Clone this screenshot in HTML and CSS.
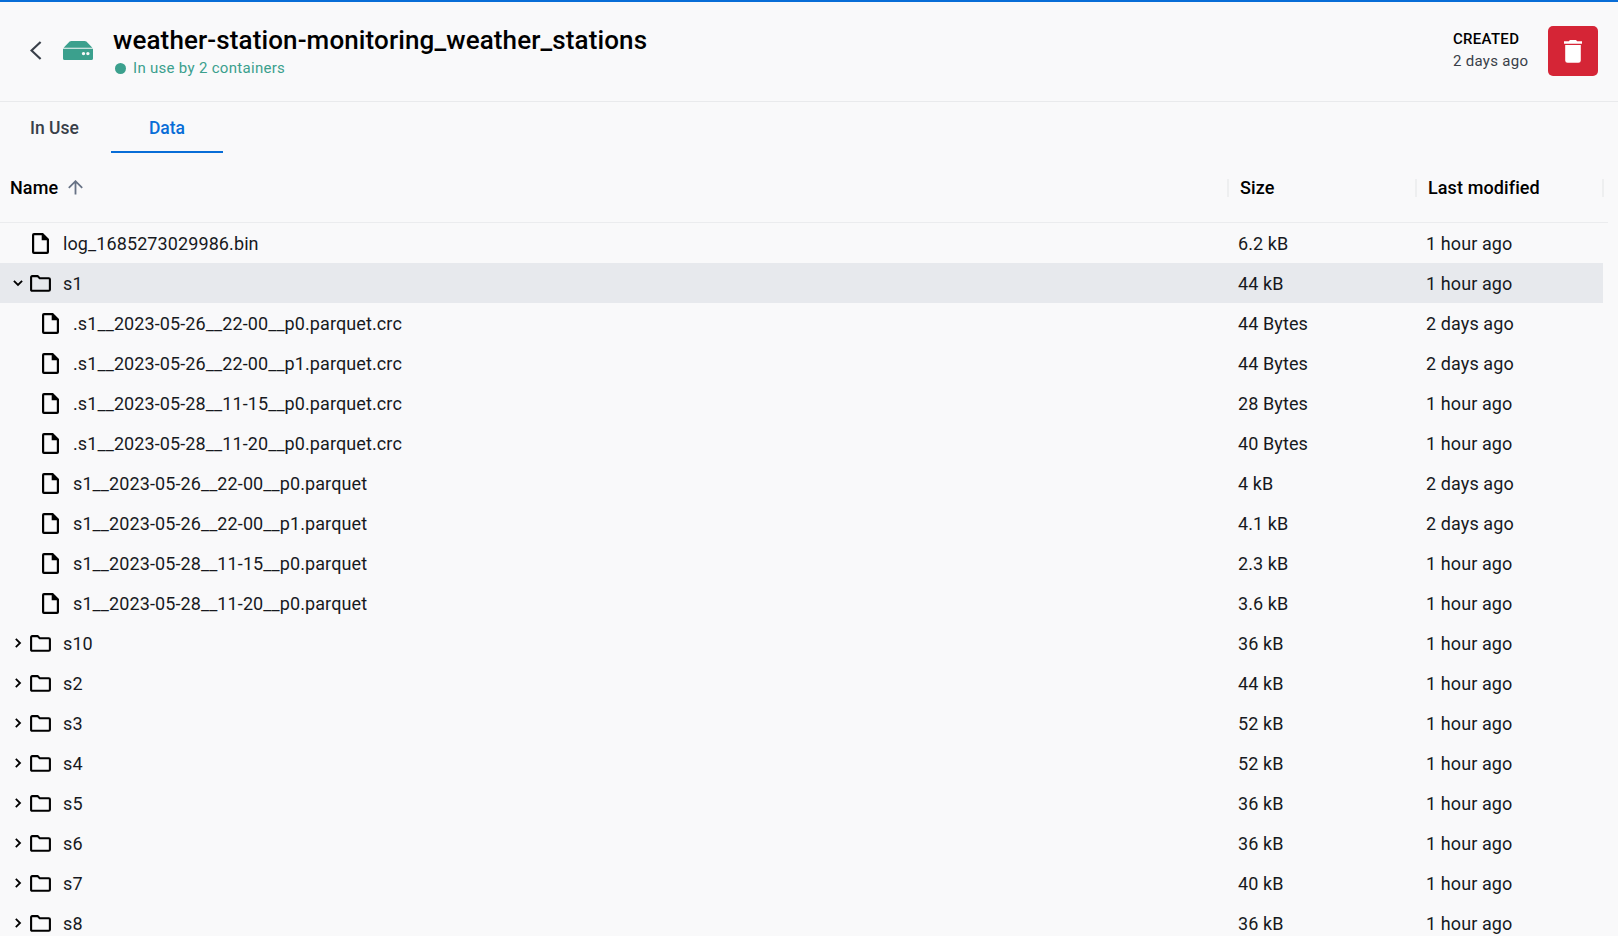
FILE: index.html
```
<!DOCTYPE html>
<html lang="en">
<head>
<meta charset="utf-8">
<title>weather-station-monitoring_weather_stations</title>
<link rel="stylesheet" href="styles.css">
</head>
<body>
<svg class="sprite" aria-hidden="true">
  <symbol id="file" viewBox="0 0 17 21"><path fill-rule="evenodd" d="M2 0H11L17 6V19Q17 21 15 21H2Q0 21 0 19V2Q0 0 2 0ZM2.2 2.2V18.8H14.8V7.3H9.7V2.2Z"/></symbol>
  <symbol id="folder" viewBox="0 0 21 17"><path d="M1.1 2.2Q1.1 1.1 2.2 1.1H7.6L9.7 3.2H18.8Q19.9 3.2 19.9 4.3V14.7Q19.9 15.8 18.8 15.8H2.2Q1.1 15.8 1.1 14.7Z" fill="none" stroke="#000" stroke-width="2.1"/></symbol>
  <symbol id="right" viewBox="0 0 10 10"><path d="M2.8 .9L7 5L2.8 9.1" fill="none" stroke="#000" stroke-width="1.8"/></symbol>
  <symbol id="down" viewBox="0 0 10 10"><path d="M.9 2.8L5 7L9.1 2.8" fill="none" stroke="#000" stroke-width="1.8"/></symbol>
</svg>
<header class="header">
  <svg class="back" viewBox="0 0 12 19"><path d="M10.6 1L1.5 9.5L10.6 18" fill="none" stroke="#393f49" stroke-width="2.2"/></svg>
  <svg class="volume" viewBox="0 0 30 19"><path fill="#3ba08d" fill-rule="evenodd" d="M8.4 0H21.6Q22.6 0 23.4 .6L29.4 6.7H.6L6.6 .6Q7.4 0 8.4 0ZM0 7.8H30V17.4Q30 19 28.4 19H1.6Q0 19 0 17.4ZM20.5 10.9A1.7 1.7 0 1 0 20.5 14.3A1.7 1.7 0 1 0 20.5 10.9ZM24.9 10.9A1.7 1.7 0 1 0 24.9 14.3A1.7 1.7 0 1 0 24.9 10.9Z"/></svg>
  <div class="heading">
    <h1 class="title">weather-station-monitoring_weather_stations</h1>
    <div class="status"><span class="dot"></span><span>In use by 2 containers</span></div>
  </div>
  <div class="created"><div class="created-label">CREATED</div><div class="created-value">2 days ago</div></div>
  <button class="delete" aria-label="Delete"><svg class="trash" viewBox="0 0 18 23"><path fill="#fff" d="M0 1.3H4.8L6 0H12L13.2 1.3H18V3.7H0ZM1.2 5H16.8V20.4Q16.8 22.8 14.4 22.8H3.6Q1.2 22.8 1.2 20.4Z"/></svg></button>
</header>
<nav class="tabs"><a class="tab">In Use</a><a class="tab active">Data</a></nav>
<main class="table">
  <div class="thead">
    <div class="th th-name"><span>Name</span><svg class="sort" viewBox="0 0 15 15"><path d="M7.5 14.5V1.3M.8 7.8L7.5 1.2L14.2 7.8" fill="none" stroke="#677285" stroke-width="1.8"/></svg></div>
    <div class="th">Size</div>
    <div class="th">Last modified</div>
  </div>
  <div class="row"><div class="name"><span class="chev"></span><svg class="icon file"><use href="#file"/></svg><span>log_1685273029986.bin</span></div><div>6.2 kB</div><div>1 hour ago</div></div>
  <div class="row selected"><div class="name"><svg class="chev"><use href="#down"/></svg><svg class="icon folder"><use href="#folder"/></svg><span>s1</span></div><div>44 kB</div><div>1 hour ago</div></div>
  <div class="row child"><div class="name"><span class="chev"></span><svg class="icon file"><use href="#file"/></svg><span>.s1__2023-05-26__22-00__p0.parquet.crc</span></div><div>44 Bytes</div><div>2 days ago</div></div>
  <div class="row child"><div class="name"><span class="chev"></span><svg class="icon file"><use href="#file"/></svg><span>.s1__2023-05-26__22-00__p1.parquet.crc</span></div><div>44 Bytes</div><div>2 days ago</div></div>
  <div class="row child"><div class="name"><span class="chev"></span><svg class="icon file"><use href="#file"/></svg><span>.s1__2023-05-28__11-15__p0.parquet.crc</span></div><div>28 Bytes</div><div>1 hour ago</div></div>
  <div class="row child"><div class="name"><span class="chev"></span><svg class="icon file"><use href="#file"/></svg><span>.s1__2023-05-28__11-20__p0.parquet.crc</span></div><div>40 Bytes</div><div>1 hour ago</div></div>
  <div class="row child"><div class="name"><span class="chev"></span><svg class="icon file"><use href="#file"/></svg><span>s1__2023-05-26__22-00__p0.parquet</span></div><div>4 kB</div><div>2 days ago</div></div>
  <div class="row child"><div class="name"><span class="chev"></span><svg class="icon file"><use href="#file"/></svg><span>s1__2023-05-26__22-00__p1.parquet</span></div><div>4.1 kB</div><div>2 days ago</div></div>
  <div class="row child"><div class="name"><span class="chev"></span><svg class="icon file"><use href="#file"/></svg><span>s1__2023-05-28__11-15__p0.parquet</span></div><div>2.3 kB</div><div>1 hour ago</div></div>
  <div class="row child"><div class="name"><span class="chev"></span><svg class="icon file"><use href="#file"/></svg><span>s1__2023-05-28__11-20__p0.parquet</span></div><div>3.6 kB</div><div>1 hour ago</div></div>
  <div class="row"><div class="name"><svg class="chev"><use href="#right"/></svg><svg class="icon folder"><use href="#folder"/></svg><span>s10</span></div><div>36 kB</div><div>1 hour ago</div></div>
  <div class="row"><div class="name"><svg class="chev"><use href="#right"/></svg><svg class="icon folder"><use href="#folder"/></svg><span>s2</span></div><div>44 kB</div><div>1 hour ago</div></div>
  <div class="row"><div class="name"><svg class="chev"><use href="#right"/></svg><svg class="icon folder"><use href="#folder"/></svg><span>s3</span></div><div>52 kB</div><div>1 hour ago</div></div>
  <div class="row"><div class="name"><svg class="chev"><use href="#right"/></svg><svg class="icon folder"><use href="#folder"/></svg><span>s4</span></div><div>52 kB</div><div>1 hour ago</div></div>
  <div class="row"><div class="name"><svg class="chev"><use href="#right"/></svg><svg class="icon folder"><use href="#folder"/></svg><span>s5</span></div><div>36 kB</div><div>1 hour ago</div></div>
  <div class="row"><div class="name"><svg class="chev"><use href="#right"/></svg><svg class="icon folder"><use href="#folder"/></svg><span>s6</span></div><div>36 kB</div><div>1 hour ago</div></div>
  <div class="row"><div class="name"><svg class="chev"><use href="#right"/></svg><svg class="icon folder"><use href="#folder"/></svg><span>s7</span></div><div>40 kB</div><div>1 hour ago</div></div>
  <div class="row"><div class="name"><svg class="chev"><use href="#right"/></svg><svg class="icon folder"><use href="#folder"/></svg><span>s8</span></div><div>36 kB</div><div>1 hour ago</div></div>
</main>
</body>
</html>
```
FILE: styles.css
```
* { box-sizing: border-box; }
body {
  margin: 0;
  height: 936px;
  overflow: hidden;
  background: #f9f9fa;
  color: #000;
  font-family: Roboto, sans-serif;
  font-size: 17.5px;
}
svg { display: block; flex: none; }
.sprite { width: 0; height: 0; float: left; }
.header {
  display: flex;
  align-items: center;
  height: 102px;
  padding: 0 20px 1px 30px;
  border-top: 2px solid #086dd7;
  border-bottom: 1px solid #e9eaec;
}
.back { width: 12px; height: 19px; margin: 0 21px 1px 0; }
.volume { width: 30px; height: 19px; margin: 0 20px 1px 0; }
.heading { flex: 1; padding-top: 3px; }
.title { margin: 0; font-size: 26px; line-height: 31px; font-weight: 500; letter-spacing: .12px; }
.status {
  display: flex;
  align-items: center;
  gap: 7px;
  padding-left: 2px;
  color: #3ba08d;
  font-size: 15px;
  line-height: 24px;
  letter-spacing: .3px;
}
.dot { width: 11px; height: 11px; border-radius: 50%; background: #3ba08d; }
.created { width: 95px; padding-bottom: 3px; font-size: 15px; line-height: 22px; letter-spacing: .3px; }
.created-label { font-weight: 500; }
.created-value { color: #393f49; }
.delete {
  display: flex;
  align-items: center;
  justify-content: center;
  width: 50px;
  height: 50px;
  padding: 0;
  border: 0;
  border-radius: 5px;
  background: #d52536;
}
.trash { width: 18px; height: 23px; }
.tabs { display: flex; height: 51px; }
.tab {
  width: 111px;
  height: 51px;
  padding: 0 30px;
  border-bottom: 2px solid transparent;
  line-height: 52px;
  font-weight: 500;
  color: #393f49;
}
.tab.active { width: 112px; padding: 0; text-align: center; color: #086dd7; border-color: #086dd7; }
.thead, .row { display: grid; grid-template-columns: 1228px 188px 187px; align-items: center; }
.thead { grid-template-columns: 1229px 188px 187px; width: 1608px; height: 70px; border-bottom: 1px solid #ebecee; }
.th {
  height: 18px;
  padding-left: 11px;
  border-right: 2px solid #eeeff0;
  font-size: 18px;
  font-weight: 500;
  line-height: 18px;
  letter-spacing: .1px;
}
.th-name { display: flex; align-items: center; gap: 10px; padding-left: 10px; }
.sort { width: 15px; height: 15px; }
.row { width: 1603px; height: 40px; font-size: 18px; line-height: 40px; padding-top: 1px; letter-spacing: .1px; color: #17191e; }
.row > div + div { padding-left: 10px; }
.row.selected { background: #e7e9ed; }
.name { display: flex; align-items: center; padding-left: 13px; }
.child .name { padding-left: 23px; }
.chev { width: 10px; height: 10px; margin: 0 7px 2px 0; }
.icon { margin: 0 12px 2px 0; }
.folder { width: 21px; height: 17px; }
.file { width: 17px; height: 21px; margin: 0 14px 2px 2px; }
```
